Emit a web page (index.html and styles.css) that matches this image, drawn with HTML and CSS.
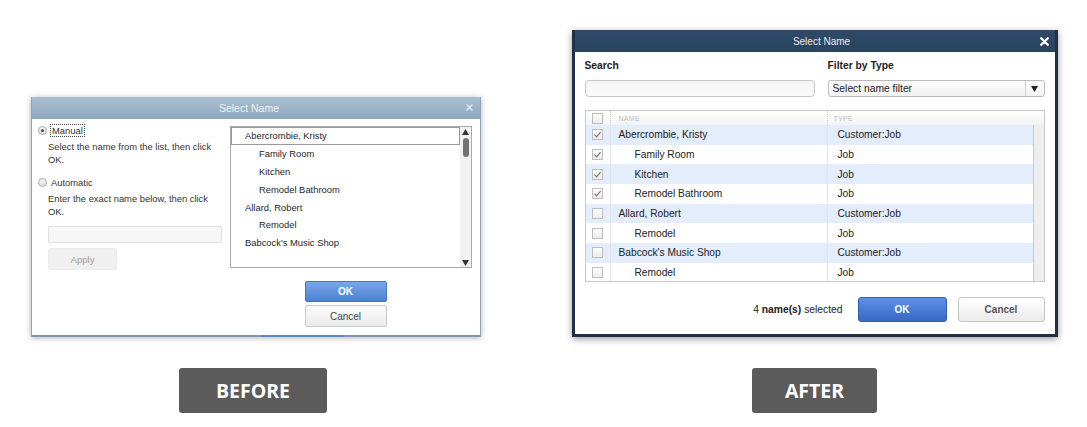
FILE: index.html
```html
<!DOCTYPE html>
<html>
<head>
<meta charset="utf-8">
<title>Select Name — Before / After</title>
<link rel="stylesheet" href="styles.css">
</head>
<body>
<div class="stage">
  <section class="col">
    <div class="slot">
      <div class="bdlg">
        <div class="b-title">
          <span class="b-title-text">Select Name</span>
          <svg class="b-close" width="7" height="7" viewBox="0 0 7 7"><path d="M1 1L6 6M6 1L1 6" stroke="#dfe7ee" stroke-width="1.6" stroke-linecap="round"/></svg>
        </div>
        <div class="b-body">
          <div class="b-left">
            <div class="radio-row"><span class="radio on"></span><span class="focus">Manual</span></div>
            <p class="b-desc">Select the name from the list, then click<br>OK.</p>
            <div class="radio-row r2"><span class="radio"></span><span>Automatic</span></div>
            <p class="b-desc d2">Enter the exact name below, then click<br>OK.</p>
            <div class="b-input"></div>
            <div class="b-apply">Apply</div>
          </div>
          <div class="b-right">
            <div class="b-list">
              <ul class="b-items">
                <li class="sel">Abercrombie, Kristy</li>
                <li class="ind">Family Room</li>
                <li class="ind">Kitchen</li>
                <li class="ind">Remodel Bathroom</li>
                <li>Allard, Robert</li>
                <li class="ind">Remodel</li>
                <li>Babcock's Music Shop</li>
              </ul>
              <div class="b-scroll">
                <svg class="arr" width="7" height="6" viewBox="0 0 7 6"><path d="M3.5 0L7 6H0Z" fill="#333"/></svg>
                <span class="thumb"></span>
                <span class="grow"></span>
                <svg class="arr" width="7" height="6" viewBox="0 0 7 6"><path d="M0 0H7L3.5 6Z" fill="#333"/></svg>
              </div>
            </div>
            <div class="b-buttons">
              <div class="b-ok">OK</div>
              <div class="b-cancel">Cancel</div>
            </div>
          </div>
        </div>
      </div>
    </div>
    <div class="tag tag-before">BEFORE</div>
  </section>

  <section class="col">
    <div class="slot">
      <div class="adlg">
        <div class="a-title">
          <span class="a-title-text">Select Name</span>
          <svg class="a-close" width="9" height="9" viewBox="0 0 9 9"><path d="M1.2 1.2L7.8 7.8M7.8 1.2L1.2 7.8" stroke="#fff" stroke-width="2.3" stroke-linecap="round"/></svg>
        </div>
        <div class="a-body">
          <div class="a-filters">
            <div class="a-field a-search">
              <div class="a-label">Search</div>
              <div class="a-input"></div>
            </div>
            <div class="a-field a-filter">
              <div class="a-label">Filter by Type</div>
              <div class="a-select">
                <span class="a-select-text">Select name filter</span>
                <span class="a-select-btn"><svg width="7" height="6" viewBox="0 0 7 6"><path d="M0 0H7L3.5 6Z" fill="#222"/></svg></span>
              </div>
            </div>
          </div>

          <div class="a-table">
            <div class="a-head">
              <div class="c-chk"><span class="cb"></span></div>
              <div class="c-name">NAME</div>
              <div class="c-type">TYPE</div>
            </div>
            <div class="a-rows-wrap">
              <div class="a-rows">
                <div class="a-row alt">
                  <div class="c-chk"><span class="cb"><svg width="9" height="9" viewBox="0 0 9 9"><path d="M1.5 4.6L3.6 6.8L7.6 2.2" fill="none" stroke="#777" stroke-width="1.2"/></svg></span></div>
                  <div class="c-name">Abercrombie, Kristy</div>
                  <div class="c-type">Customer:Job</div>
                </div>
                <div class="a-row">
                  <div class="c-chk"><span class="cb"><svg width="9" height="9" viewBox="0 0 9 9"><path d="M1.5 4.6L3.6 6.8L7.6 2.2" fill="none" stroke="#777" stroke-width="1.2"/></svg></span></div>
                  <div class="c-name ind">Family Room</div>
                  <div class="c-type">Job</div>
                </div>
                <div class="a-row alt">
                  <div class="c-chk"><span class="cb"><svg width="9" height="9" viewBox="0 0 9 9"><path d="M1.5 4.6L3.6 6.8L7.6 2.2" fill="none" stroke="#777" stroke-width="1.2"/></svg></span></div>
                  <div class="c-name ind">Kitchen</div>
                  <div class="c-type">Job</div>
                </div>
                <div class="a-row">
                  <div class="c-chk"><span class="cb"><svg width="9" height="9" viewBox="0 0 9 9"><path d="M1.5 4.6L3.6 6.8L7.6 2.2" fill="none" stroke="#777" stroke-width="1.2"/></svg></span></div>
                  <div class="c-name ind">Remodel Bathroom</div>
                  <div class="c-type">Job</div>
                </div>
                <div class="a-row alt">
                  <div class="c-chk"><span class="cb"></span></div>
                  <div class="c-name">Allard, Robert</div>
                  <div class="c-type">Customer:Job</div>
                </div>
                <div class="a-row">
                  <div class="c-chk"><span class="cb"></span></div>
                  <div class="c-name ind">Remodel</div>
                  <div class="c-type">Job</div>
                </div>
                <div class="a-row alt">
                  <div class="c-chk"><span class="cb"></span></div>
                  <div class="c-name">Babcock's Music Shop</div>
                  <div class="c-type">Customer:Job</div>
                </div>
                <div class="a-row">
                  <div class="c-chk"><span class="cb"></span></div>
                  <div class="c-name ind">Remodel</div>
                  <div class="c-type">Job</div>
                </div>
              </div>
              <div class="a-scroll"></div>
            </div>
          </div>

          <div class="a-footer">
            <span class="a-count">4 <b>name(s)</b> selected</span>
            <div class="a-ok">OK</div>
            <div class="a-cancel">Cancel</div>
          </div>
        </div>
      </div>
    </div>
    <div class="tag tag-after">AFTER</div>
  </section>
</div>
</body>
</html>
```

FILE: styles.css
```css
* { box-sizing: border-box; }

html, body {
  margin: 0;
  padding: 0;
  background: #fff;
}

body {
  font-family: "Liberation Sans", Arial, sans-serif;
  color: #222;
  width: 1087px;
  height: 427px;
  overflow: hidden;
}

.stage {
  display: grid;
  grid-template-columns: 506px 543px;
  column-gap: 37px;
}

.col {
  display: flex;
  flex-direction: column;
  align-items: center;
}

.slot {
  height: 337px;
  display: flex;
  flex-direction: column;
  justify-content: flex-end;
}

/* ---------- labels ---------- */
.tag {
  margin-top: 31px;
  height: 45px;
  background: #5b5b5b;
  border-radius: 3px;
  color: #fff;
  font-family: "Open Sans", sans-serif;
  font-weight: 700;
  font-size: 19.5px;
  display: flex;
  align-items: center;
  justify-content: center;
}
.tag-before { width: 148px; }
.tag-after { width: 125px; }

/* ---------- BEFORE dialog ---------- */
.bdlg {
  position: relative;
  width: 450px;
  height: 240px;
  margin-left: 6px;
  background: #fff;
  border: 1px solid #8ea3b6;
  border-top: none;
  border-bottom: 2px solid #7a96b1;
  box-shadow: 0 1px 6px rgba(0, 0, 0, 0.3);
}
.bdlg::after {
  content: "";
  position: absolute;
  left: 229px;
  bottom: -2px;
  width: 83px;
  height: 2px;
  background: #5f89bd;
}

.b-title {
  position: relative;
  height: 22px;
  background: linear-gradient(#abc0d2, #8da7bd);
  display: flex;
  align-items: center;
  justify-content: center;
  padding-right: 14px;
}
.b-title-text {
  color: #eef3f7;
  font-size: 10.5px;
}
.b-close {
  position: absolute;
  right: 7px;
  top: 7px;
}

.b-body {
  display: flex;
  height: 216px;
  padding-left: 6px;
}

.b-left {
  width: 192px;
  padding-top: 5px;
  font-size: 9.4px;
  color: #333;
}

.radio-row {
  height: 12px;
  display: flex;
  align-items: center;
  gap: 4px;
}
.radio-row.r2 { margin-top: 10px; }

.radio {
  width: 9px;
  height: 9px;
  border-radius: 50%;
  border: 1px solid #a9a9a9;
  background: linear-gradient(#f6f6f6, #dcdcdc);
  display: flex;
  align-items: center;
  justify-content: center;
}
.radio.on::after {
  content: "";
  width: 3px;
  height: 3px;
  border-radius: 50%;
  background: #4a4a4a;
}

.focus {
  outline: 1px dotted #444;
  outline-offset: 0;
  padding: 0 1px;
  line-height: 11px;
}

.b-desc {
  margin: 5px 0 0 10px;
  line-height: 12.5px;
}

.b-input {
  margin: 8px 0 0 10px;
  width: 174px;
  height: 17px;
  border: 1px solid #e0e0e0;
  border-radius: 2px;
  background: #f7f7f7;
}

.b-apply {
  margin: 5px 0 0 10px;
  width: 69px;
  height: 22px;
  background: #f0f0f0;
  border: 1px solid #ececec;
  border-radius: 2px;
  color: #9c9c9c;
  font-size: 9.6px;
  display: flex;
  align-items: center;
  justify-content: center;
}

.b-right {
  padding-top: 7px;
}

.b-list {
  width: 242px;
  height: 142px;
  border: 1px solid #a9a9a9;
  display: flex;
}

.b-items {
  list-style: none;
  margin: 0;
  padding: 0;
  flex: 1;
  font-size: 9.4px;
  color: #262626;
}
.b-items li {
  height: 17.9px;
  line-height: 17.9px;
  padding-left: 14px;
  white-space: nowrap;
}
.b-items li.ind { padding-left: 28px; }
.b-items li.sel {
  border: 1px solid #9a9a9a;
  line-height: 15.9px;
  padding-left: 13px;
}

.b-scroll {
  width: 11px;
  background: #f1f1f1;
  display: flex;
  flex-direction: column;
  align-items: center;
  padding: 2px 0 1px;
}
.b-scroll .arr { flex: none; }
.b-scroll .thumb {
  margin-top: 3px;
  width: 6px;
  height: 19px;
  border-radius: 3px;
  background: #737373;
}
.b-scroll .grow { flex: 1; }

.b-buttons {
  margin-top: 13px;
  padding-right: 11px;
  display: flex;
  flex-direction: column;
  align-items: center;
  gap: 3px;
}
.b-ok, .b-cancel {
  width: 82px;
  height: 21px;
  border-radius: 2px;
  font-size: 10px;
  display: flex;
  align-items: center;
  justify-content: center;
}
.b-ok {
  background: linear-gradient(#7aa8e9, #4b80d4);
  border: 1px solid #4676c2;
  color: #fff;
  font-weight: 700;
}
.b-cancel {
  height: 22px;
  background: linear-gradient(#fafafa, #ececec);
  border: 1px solid #c9c9c9;
  color: #444;
}

/* ---------- AFTER dialog ---------- */
.adlg {
  width: 486px;
  height: 307px;
  background: #fff;
  border: 3px solid #1f3149;
  border-top: none;
  box-shadow: 0 2px 7px rgba(0, 0, 0, 0.4);
}

.a-title {
  position: relative;
  height: 22px;
  background: linear-gradient(#2f4a68, #2a435e);
  display: flex;
  align-items: center;
  justify-content: center;
  padding-left: 14px;
}
.a-title-text {
  color: #e8eef4;
  font-size: 10px;
}
.a-close {
  position: absolute;
  right: 6px;
  top: 7px;
}

.a-body {
  padding: 0 10px;
}

.a-filters {
  display: flex;
  gap: 13px;
  padding-top: 8px;
}
.a-search { width: 230px; }
.a-filter { width: 217px; }

.a-label {
  height: 12px;
  line-height: 12px;
  font-size: 10.3px;
  font-weight: 700;
  color: #222;
}

.a-input {
  margin-top: 8px;
  height: 17px;
  border: 1px solid #c9c9c9;
  border-radius: 4px;
  background: linear-gradient(#f4f4f4, #fafafa);
}

.a-select {
  margin-top: 8px;
  height: 17px;
  border: 1px solid #bcbcbc;
  border-radius: 3px;
  background: linear-gradient(#fdfdfd, #f1f1f1);
  display: flex;
  align-items: center;
}
.a-select-text {
  flex: 1;
  padding-left: 4px;
  font-size: 10.3px;
  color: #222;
}
.a-select-btn {
  width: 19px;
  height: 100%;
  border-left: 1px solid #cfcfcf;
  display: flex;
  align-items: center;
  justify-content: center;
}

.a-table {
  margin-top: 13px;
  height: 172px;
  border: 1px solid #c9c9c9;
  display: flex;
  flex-direction: column;
}

.a-head {
  height: 14px;
  flex: none;
  display: flex;
  background: linear-gradient(#ffffff, #f3f3f3);
  font-size: 7px;
  color: #bdbdbd;
  letter-spacing: 0.3px;
}
.a-head > div {
  display: flex;
  align-items: center;
}
.a-head .c-chk { border-right: 1px dotted #cfcfcf; }
.a-head .c-name { border-right: 1px dotted #cfcfcf; padding-left: 8px; }
.a-head .c-type { flex: 1; padding-left: 6px; }

.c-chk {
  width: 25px;
  flex: none;
  padding-left: 6px;
  display: flex;
  align-items: center;
}
.c-name {
  width: 217px;
  flex: none;
}

.cb {
  width: 11px;
  height: 11px;
  border: 1px solid #bdbdbd;
  background: linear-gradient(#fdfdfd, #ececec);
  display: flex;
  align-items: center;
  justify-content: center;
}

.a-rows-wrap {
  flex: 1;
  display: flex;
  overflow: hidden;
}

.a-rows {
  flex: 1;
  overflow: hidden;
}

.a-row {
  height: 19.7px;
  display: flex;
  align-items: stretch;
  font-size: 10.2px;
  color: #222;
  background: #fff;
}
.a-row.alt { background: #e3edfb; }
.a-row > div {
  display: flex;
  align-items: center;
}
.a-row .c-chk { border-right: 1px solid #e1e4e8; }
.a-row .c-name { border-right: 1px solid #e1e4e8; padding-left: 8px; white-space: nowrap; }
.a-row .c-name.ind { padding-left: 24px; }
.a-row .c-type { flex: 1; padding-left: 10px; }

.a-scroll {
  width: 11px;
  flex: none;
  background: #eeeeee;
  border-left: 1px solid #c9c9c9;
}

.a-footer {
  margin-top: 15px;
  height: 25px;
  display: flex;
  align-items: center;
  justify-content: flex-end;
}
.a-count {
  font-size: 10.3px;
  color: #222;
  margin-right: 15px;
}
.a-count b { font-weight: 700; }

.a-ok, .a-cancel {
  height: 25px;
  border-radius: 3px;
  font-size: 10px;
  font-weight: 700;
  display: flex;
  align-items: center;
  justify-content: center;
}
.a-ok {
  width: 89px;
  background: linear-gradient(#5d90e2, #3768c6);
  border: 1px solid #2f5db0;
  color: #fff;
}
.a-cancel {
  width: 87px;
  margin-left: 11px;
  background: linear-gradient(#ffffff, #ebebeb);
  border: 1px solid #c4c4c4;
  color: #555;
}
```
